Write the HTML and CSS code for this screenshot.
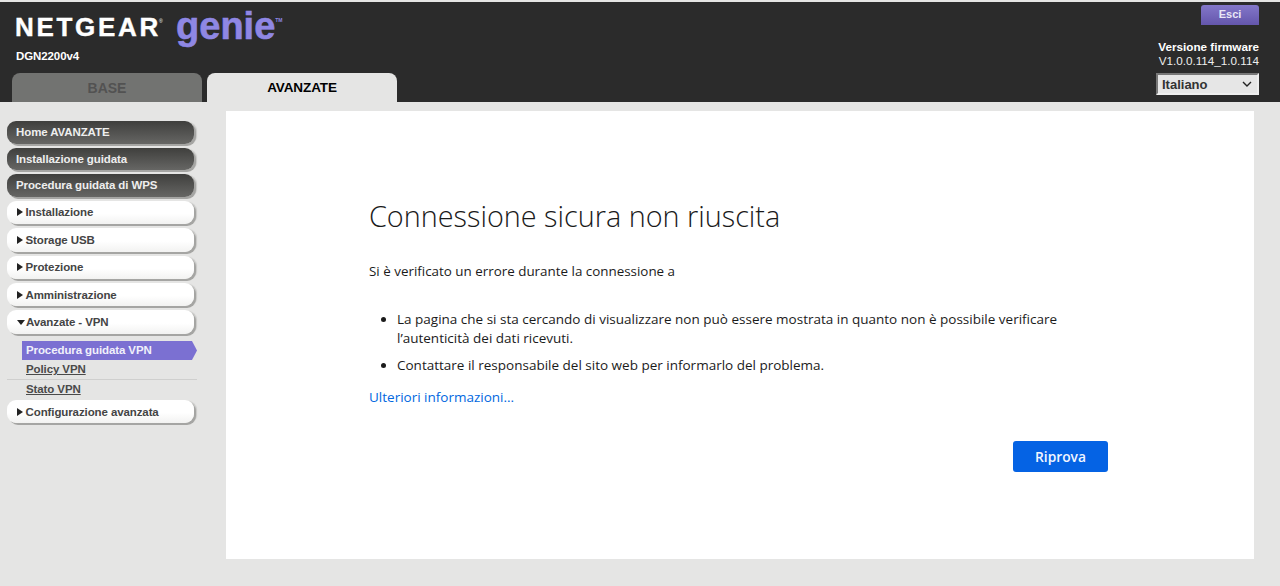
FILE: index.html
```html
<!DOCTYPE html>
<html lang="it">
<head>
<meta charset="utf-8">
<title>NETGEAR genie</title>
<link rel="stylesheet" href="styles.css">
</head>
<body>
<header class="header">
  <div class="brand">
    <div class="logo"><span class="logo-net">NETGEAR</span><span class="logo-reg">®</span><span class="logo-genie">genie</span><span class="logo-tm">TM</span></div>
    <div class="model">DGN2200v4</div>
    <div class="tabs">
      <div class="tab tab-off">BASE</div>
      <div class="tab tab-on">AVANZATE</div>
    </div>
  </div>
  <div class="tools">
    <button class="logout">Esci</button>
    <div class="fw-title">Versione firmware</div>
    <div class="fw-ver">V1.0.0.114_1.0.114</div>
    <div class="lang"><span>Italiano</span><svg class="chev" width="10" height="6" viewBox="0 0 10 6"><path d="M1 1l4 4 4-4" fill="none" stroke="#222" stroke-width="1.4"/></svg></div>
  </div>
</header>
<div class="main">
  <nav class="side">
    <a class="nav dark">Home AVANZATE</a>
    <a class="nav dark">Installazione guidata</a>
    <a class="nav dark">Procedura guidata di WPS</a>
    <a class="nav light"><i class="tri"></i>Installazione</a>
    <a class="nav light"><i class="tri"></i>Storage USB</a>
    <a class="nav light"><i class="tri"></i>Protezione</a>
    <a class="nav light"><i class="tri"></i>Amministrazione</a>
    <a class="nav light"><i class="tri-down"></i>Avanzate - VPN</a>
    <div class="sub">
      <a class="sub-item active">Procedura guidata VPN</a>
      <a class="sub-item line">Policy VPN</a>
      <a class="sub-item">Stato VPN</a>
    </div>
    <a class="nav light"><i class="tri"></i>Configurazione avanzata</a>
  </nav>
  <section class="panel">
    <div class="err">
      <h1>Connessione sicura non riuscita</h1>
      <p class="lead">Si è verificato un errore durante la connessione a</p>
      <ul>
        <li>La pagina che si sta cercando di visualizzare non può essere mostrata in quanto non è possibile verificare l’autenticità dei dati ricevuti.</li>
        <li>Contattare il responsabile del sito web per informarlo del problema.</li>
      </ul>
      <a class="more">Ulteriori informazioni...</a>
      <div class="actions"><button class="retry">Riprova</button></div>
    </div>
  </section>
</div>
</body>
</html>
```
FILE: styles.css
```css
* { box-sizing: border-box; }
html, body { margin: 0; height: 586px; overflow: hidden; }
body { background: #e5e5e4; font-family: "Liberation Sans", Arial, sans-serif; padding-top: 2px; }
.header { height: 100px; background: #2b2b2b; display: flex; justify-content: space-between; }
.brand { padding-left: 12px; display: flex; flex-direction: column; }
.logo { height: 44px; display: flex; align-items: flex-start; padding-left: 3px; color: #fff; white-space: nowrap; }
.logo-net { font-size: 26px; font-weight: 700; letter-spacing: 2.7px; line-height: 30px; margin-top: 10px; -webkit-text-stroke: 0.4px #fff; }
.logo-reg { font-size: 5px; line-height: 8px; margin: 15px 0 0 -2px; width: 17px; }
.logo-genie { font-size: 38px; font-weight: 700; color: #8f87e4; line-height: 40px; margin-top: 4px; -webkit-text-stroke: 0.6px #8f87e4; }
.logo-tm { font-size: 5px; color: #8f87e4; font-weight: 700; margin-top: 15px; }
.model { font-size: 11.5px; letter-spacing: -0.1px; font-weight: 700; color: #fff; line-height: 14px; padding-left: 4px; margin-top: 3px; }
.tabs { display: flex; gap: 5px; margin-top: 10px; }
.tab { width: 190px; height: 29px; border-radius: 8px 8px 0 0; text-align: center; font-size: 14px; font-weight: 700; line-height: 30px; }
.tab-off { background: #727371; color: #525252; }
.tab-on { background: #e5e5e4; color: #000; font-size: 13.5px; letter-spacing: -0.1px; }
.tools { width: 120px; margin-right: 21px; display: flex; flex-direction: column; align-items: flex-end; color: #fff; }
.logout { width: 58px; height: 20px; margin-top: 3px; border: 0; padding: 0 0 3px; border-radius: 3px 3px 0 0; background: linear-gradient(#8377c9, #6456ac); color: #e8e6f6; font: 700 11px "Liberation Sans", Arial, sans-serif; }
.fw-title { font-size: 11.7px; font-weight: 700; line-height: 14px; margin-top: 15px; white-space: nowrap; }
.fw-ver { font-size: 11.7px; line-height: 14px; white-space: nowrap; color: #eee; }
.lang { width: 103px; height: 22px; margin-top: 5px; background: #e6e6e6; border: 2px solid; border-color: #777 #eee #eee #777; display: flex; align-items: center; justify-content: space-between; padding: 0 5px 0 4px; font-size: 13px; font-weight: 700; color: #333; }
.main { display: flex; padding-top: 9px; height: 484px; }
.side { width: 226px; flex: none; padding: 10px 0 0 7px; }
.nav { display: flex; align-items: center; width: 187px; height: 22.6px; margin-bottom: 4px; border-radius: 9px; font-size: 11.5px; letter-spacing: -0.1px; font-weight: 700; padding-left: 9px; white-space: nowrap; }
.dark { color: #eee; background: linear-gradient(#3f3f3d, #666664); box-shadow: 2px 2px 0 #a5a5a3, 3px 1px 1px #c8c8c6; }
.light { color: #444; background: linear-gradient(#fff 55%, #f2f2f1); box-shadow: 2px 2px 0 #a5a5a3, 3px 1px 1px #c8c8c6; height: 23.4px; padding-left: 10px; }
.tri { width: 0; height: 0; margin-right: 2.5px; border-left: 6px solid #222; border-top: 4px solid transparent; border-bottom: 4px solid transparent; }
.tri-down { width: 0; height: 0; margin-right: 1px; border-top: 5px solid #222; border-left: 4px solid transparent; border-right: 4px solid transparent; }
.sub { margin: 7.3px 0 0.7px 15px; width: 175px; }
.sub-item { display: block; height: 19px; line-height: 18px; padding-left: 4px; font-size: 11.5px; letter-spacing: -0.1px; font-weight: 700; color: #4a4a4a; text-decoration: underline; white-space: nowrap; }
.active { color: #f1f0fb; text-decoration: none; background: #7b70d2; clip-path: polygon(0 0, 170px 0, 175px 50%, 170px 100%, 0 100%); }
.line { border-bottom: 1px solid #cfcfce; height: 20.3px; margin-left: -15px; padding-left: 19px; width: 190px; }
.panel { width: 1028px; height: 448px; background: #fff; padding: 86px 0 0 143px; font-family: "Open Sans", "Noto Sans", sans-serif; }
.err { width: 739px; color: #1b1b1b; }
h1 { margin: 0; font-size: 28.8px; font-weight: 300; line-height: 38px; color: #1a1a1a; }
.lead { margin: 26px 0 0; font-size: 13.4px; line-height: 20px; }
ul { margin: 28.5px 0 0; padding: 0 0 0 28px; font-size: 13.5px; line-height: 19px; }
li { margin-bottom: 8px; }
.more { display: block; margin-top: 12.5px; font-size: 13.5px; line-height: 20px; color: #0067e0; }
.actions { display: flex; justify-content: flex-end; margin-top: 34px; }
.retry { width: 95px; height: 31px; border: 0; border-radius: 3px; background: #0563e4; color: #f2f6ff; font: 600 13.8px "Open Sans", sans-serif; }
```
